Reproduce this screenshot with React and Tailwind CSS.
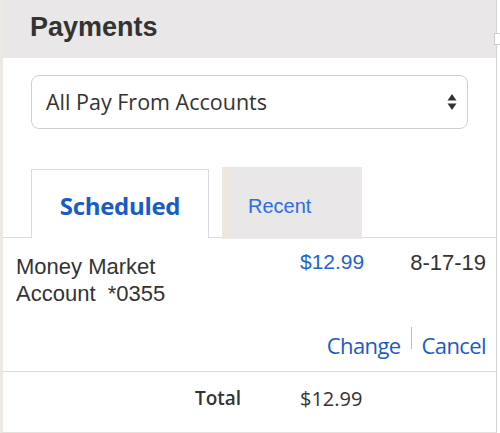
import React from 'react';

const sans = { fontFamily: '"Liberation Sans", Arial, sans-serif' };
const open = { fontFamily: '"Open Sans", "Liberation Sans", sans-serif' };

const SelectArrows = () => (
  <svg width="10" height="18" viewBox="0 0 10 18" className="text-[#333]">
    <path d="M5 1 L9.5 7.5 H0.5 Z" fill="currentColor" />
    <path d="M5 17 L9.5 10.5 H0.5 Z" fill="currentColor" />
  </svg>
);

const App = () => {
  return (
    <div className="relative w-[500px] h-[433px] bg-white overflow-hidden">
      <div className="w-[497px] h-full border-l-[3px] border-r border-l-[#ece8e2] border-r-[#d6d2ce] border-b border-b-[#e4e0dc] flex flex-col">
        <div className="h-[58px] bg-[#e9e7e8] flex items-center pl-[27px] pb-[3px]">
          <h1 className="text-[27px] font-bold text-[#333]" style={sans}>
            Payments
          </h1>
        </div>

        <div className="pt-[17px] px-[28px]">
          <div className="h-[54px] rounded-[8px] border border-[#cfcfcf] flex items-center justify-between pl-[14px] pr-[10px]">
            <span className="text-[21.5px] text-[#333]" style={open}>
              All Pay From Accounts
            </span>
            <SelectArrows />
          </div>
        </div>

        <div className="mt-[40px] flex items-end px-[28px] border-b border-[#dcdcdc] h-[69px]">
          <div className="w-[178px] h-[69px] bg-white border border-b-0 border-[#dcdcdc] -mb-px flex items-center justify-center pt-[3px]">
            <span className="text-[24px] font-bold text-[#1a5bc4] tracking-[-0.3px]" style={open}>
              Scheduled
            </span>
          </div>
          <div className="ml-[13px] w-[140px] h-[72px] -mb-[2px] bg-[#e9e7e8] flex">
            <div className="w-[10px] h-full bg-[#ede7df]" />
            <div className="flex-1 flex items-center pl-[16px] pt-[6px]">
              <span className="text-[20px] text-[#2a6ee0]" style={sans}>
                Recent
              </span>
            </div>
          </div>
        </div>

        <div className="flex pl-[13px] pr-[10px] pt-[8px]">
          <div className="w-[284px] text-[22px] leading-[27px] text-[#333] pt-[7px]" style={sans}>
            <div>Money Market</div>
            <div>Account&nbsp;&nbsp;*0355</div>
          </div>
          <div className="text-[21px] text-[#1f63cc]" style={sans}>
            $12.99
          </div>
          <div className="flex-1 text-right text-[22px] text-[#333]" style={sans}>
            8-17-19
          </div>
        </div>
        <div className="flex justify-end items-start pr-[10px] pt-[22px] pb-[9px]" style={open}>
          <span className="text-[22px] text-[#1a5bc4] tracking-[-0.6px]">Change</span>
          <span className="w-px h-[22px] bg-[#bdbdbd] mx-[10px] -mt-[2px]" />
          <span className="text-[22px] text-[#1a5bc4] tracking-[-0.6px]">Cancel</span>
        </div>

        <div className="border-t border-[#dcdcdc] flex pt-[12px]">
          <div className="w-[192px]" />
          <div className="w-[105px] text-[19px] font-semibold text-[#333]" style={open}>
            Total
          </div>
          <div className="text-[20px] text-[#333]" style={open}>
            $12.99
          </div>
        </div>
      </div>
      <div className="absolute left-[494px] top-[33px] w-[6px] h-[12px] bg-white border border-[#cfcbc7] border-r-0" />
    </div>
  );
};

export default App;
